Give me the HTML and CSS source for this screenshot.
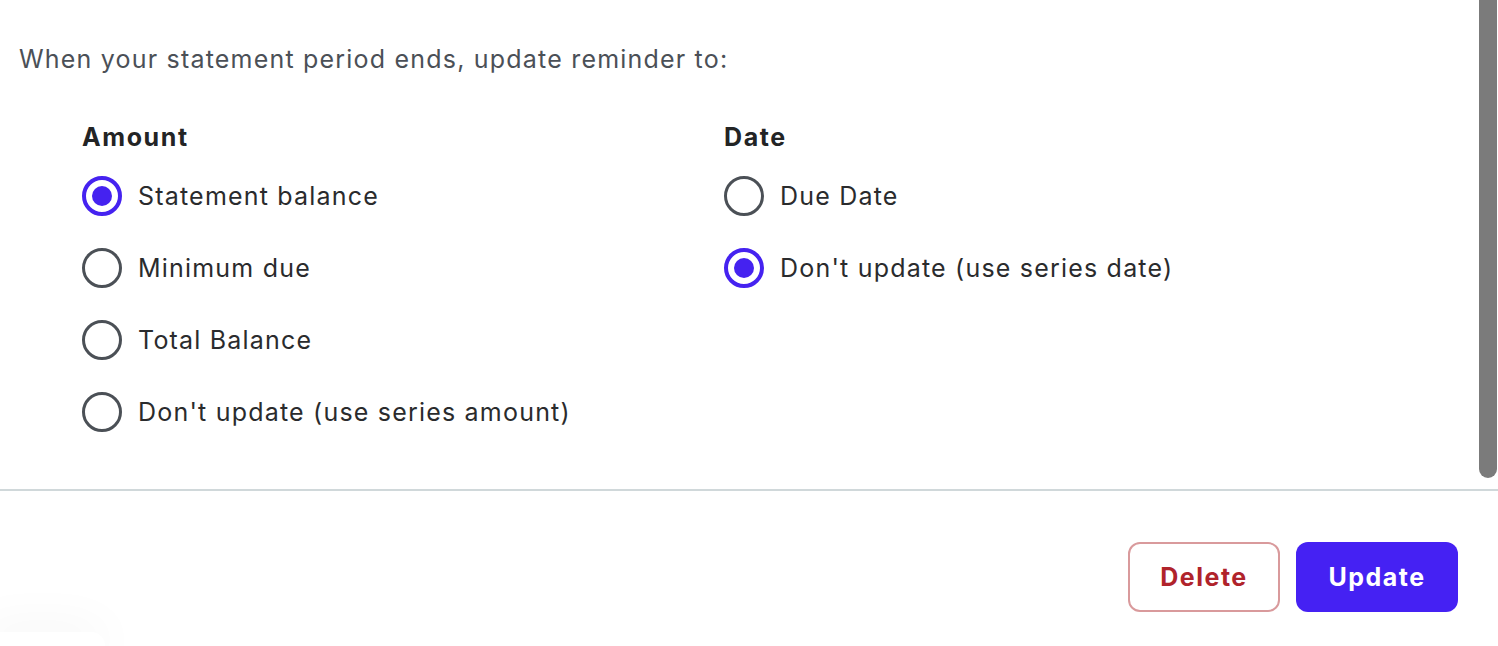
FILE: index.html
```html
<!DOCTYPE html>
<html lang="en">
<head>
<meta charset="utf-8">
<title>Update reminder</title>
<link rel="stylesheet" href="styles.css">
</head>
<body>
<div class="dialog">
  <div class="scroll-area">
    <div class="content">
      <p class="intro">When your statement period ends, update reminder to:</p>
      <div class="columns">
        <div class="group">
          <h3 class="group-title">Amount</h3>
          <label class="option"><span class="radio checked"></span><span class="label">Statement balance</span></label>
          <label class="option"><span class="radio"></span><span class="label">Minimum due</span></label>
          <label class="option"><span class="radio"></span><span class="label">Total Balance</span></label>
          <label class="option"><span class="radio"></span><span class="label">Don't update (use series amount)</span></label>
        </div>
        <div class="group">
          <h3 class="group-title">Date</h3>
          <label class="option"><span class="radio"></span><span class="label">Due Date</span></label>
          <label class="option"><span class="radio checked"></span><span class="label">Don't update (use series date)</span></label>
        </div>
      </div>
    </div>
    <div class="scrollbar"><div class="thumb"></div></div>
  </div>
  <div class="footer">
    <button class="btn btn-delete">Delete</button>
    <button class="btn btn-update">Update</button>
  </div>
  <div class="peek"></div>
</div>
</body>
</html>
```

FILE: styles.css
```css
* { box-sizing: border-box; }
html, body {
  margin: 0;
  padding: 0;
  background: #ffffff;
}
body {
  width: 1498px;
  height: 646px;
  overflow: hidden;
  font-family: Inter, "Open Sans", sans-serif;
  color: #2a2b2d;
}
.dialog {
  position: relative;
  height: 646px;
  display: flex;
  flex-direction: column;
  overflow: hidden;
}
.scroll-area {
  height: 491px;
  display: flex;
  border-bottom: 2px solid #d0d8da;
}
.content {
  flex: 1;
  padding: 43px 0 0 19px;
}
.intro {
  margin: 0;
  font-size: 25px;
  line-height: 32px;
  letter-spacing: 1.2px;
  color: #4b5057;
  font-weight: 400;
}
.columns {
  display: flex;
  margin-top: 46px;
  padding-left: 63px;
}
.group {
  display: flex;
  flex-direction: column;
  gap: 32px;
}
.group:first-child { width: 642px; }
.group-title {
  margin: 0 0 -9px 0;
  font-size: 25px;
  line-height: 32px;
  letter-spacing: 1.6px;
  font-weight: 700;
  color: #232425;
}
.option {
  display: flex;
  align-items: center;
  gap: 16px;
  height: 40px;
}
.radio {
  width: 40px;
  height: 40px;
  border-radius: 50%;
  border: 3.5px solid #4b5056;
  display: flex;
  align-items: center;
  justify-content: center;
  flex: none;
}
.radio.checked {
  border: 4px solid #4522f0;
}
.radio.checked::after {
  content: "";
  width: 20px;
  height: 20px;
  border-radius: 50%;
  background: #4522f0;
}
.label {
  font-size: 25px;
  line-height: 32px;
  letter-spacing: 1.2px;
  color: #2a2b2d;
}
.scrollbar {
  width: 20px;
  padding: 0 1px 11px 1px;
}
.thumb {
  height: 100%;
  background: #7b7b7b;
  border-radius: 0 0 10px 10px;
}
.footer {
  flex: 1;
  display: flex;
  justify-content: flex-end;
  align-items: flex-start;
  gap: 16px;
  padding: 51px 40px 0 0;
}
.btn {
  height: 70px;
  border-radius: 12px;
  font-family: inherit;
  font-size: 25px;
  letter-spacing: 1.5px;
  font-weight: 700;
  cursor: pointer;
}
.btn-delete {
  width: 152px;
  background: #ffffff;
  border: 2px solid #d99a9c;
  color: #b0232b;
}
.btn-update {
  width: 162px;
  background: #4521f3;
  border: none;
  color: #ffffff;
}
.peek {
  position: absolute;
  left: -20px;
  top: 632px;
  width: 125px;
  height: 14px;
  background: #ffffff;
  border-radius: 16px 16px 0 0;
  box-shadow: 0 0 50px rgba(0, 0, 0, 0.09);
}
```
